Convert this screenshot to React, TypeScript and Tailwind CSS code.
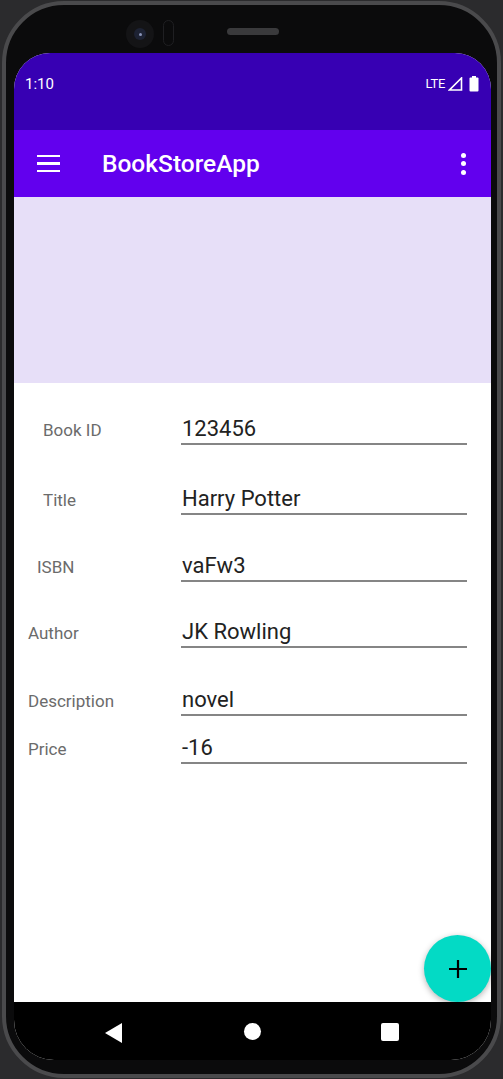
import React from "react";

const rows = [
  { label: "Book ID", value: "123456", pl: "pl-[29px]", mt: "mt-[32px]" },
  { label: "Title", value: "Harry Potter", pl: "pl-[29px]", mt: "mt-[40px]" },
  { label: "ISBN", value: "vaFw3", pl: "pl-[23px]", mt: "mt-[37px]" },
  { label: "Author", value: "JK Rowling", pl: "pl-[14px]", mt: "mt-[36px]" },
  { label: "Description", value: "novel", pl: "pl-[14px]", mt: "mt-[38px]" },
  { label: "Price", value: "-16", pl: "pl-[14px]", mt: "mt-[18px]" },
];

export default function App() {
  return (
    <div
      className="w-[503px] h-[1079px] bg-[#2b2b2d] overflow-hidden"
      style={{ fontFamily: "Roboto, 'Noto Sans', sans-serif" }}
    >
      <div className="relative mt-[1px] ml-[2px] w-[499px] h-[1077px] rounded-[62px] border-[4px] border-[#4a4a4c] bg-[#0b0b0c] pt-[48px] pl-[8px]">
        {/* camera + speaker */}
        <div className="absolute left-[120px] top-[15px] w-[28px] h-[28px] rounded-full bg-[#141416] flex items-center justify-center">
          <div className="w-[12px] h-[12px] rounded-full bg-[#1d2233] flex items-center justify-center">
            <div className="w-[3px] h-[3px] rounded-full bg-[#8a94b8]" />
          </div>
        </div>
        <div className="absolute left-[157px] top-[15px] w-[11px] h-[26px] rounded-full border border-[#1f1f22]" />
        <div className="absolute left-[221px] top-[23px] w-[52px] h-[7px] rounded-full bg-[#3a3a3c]" />

        <div className="w-[477px] h-[1007px] rounded-t-[36px] rounded-b-[40px] overflow-hidden flex flex-col bg-white">
          {/* status bar */}
          <div className="h-[77px] bg-[#3700b3] flex items-start justify-between px-[11px] pt-[22px] text-white">
            <span className="text-[15px] leading-[18px]">1:10</span>
            <div className="flex items-center gap-[3px] pr-[1px]">
              <span className="text-[13px] leading-[18px] tracking-[-0.3px]">LTE</span>
              <svg width="15" height="14" viewBox="0 0 15 14">
                <path d="M13.5 1 L13.5 13 L1.5 13 Z" fill="none" stroke="white" strokeWidth="1.6" strokeLinejoin="miter" />
              </svg>
              <svg width="10" height="16" viewBox="0 0 10 16" className="ml-[3px]">
                <rect x="3" y="0" width="4" height="2" fill="white" />
                <rect x="0.5" y="1.5" width="9" height="14" rx="1" fill="white" />
              </svg>
            </div>
          </div>
          {/* app bar */}
          <div className="h-[67px] bg-[#6200ee] flex items-center text-white">
            <div className="w-[23px] ml-[23px] flex flex-col gap-[5px]">
              <div className="h-[2.5px] bg-white" />
              <div className="h-[2.5px] bg-white" />
              <div className="h-[2.5px] bg-white" />
            </div>
            <span className="ml-[42px] text-[24.5px] font-medium leading-[30px]">BookStoreApp</span>
            <div className="ml-auto mr-[25px] flex flex-col gap-[3.5px]">
              <div className="w-[5px] h-[5px] rounded-full bg-white" />
              <div className="w-[5px] h-[5px] rounded-full bg-white" />
              <div className="w-[5px] h-[5px] rounded-full bg-white" />
            </div>
          </div>
          {/* banner */}
          <div className="h-[186px] bg-[#e7dff8]" />
          {/* form */}
          <div className="relative flex-1 bg-white">
            {rows.map((r) => (
              <div key={r.label} className={`flex items-center ${r.mt}`}>
                <div className={`w-[167px] ${r.pl} text-[17px] leading-[20px] text-[#6b6b6b]`}>
                  {r.label}
                </div>
                <div className="w-[286px] h-[30px] border-b-2 border-[#858585] text-[22px] leading-[28px] text-[#222222] pl-[1px]">
                  {r.value}
                </div>
              </div>
            ))}
            <div className="absolute right-0 bottom-0 w-[67px] h-[67px] rounded-full bg-[#03dac5] shadow-[0_2px_6px_rgba(0,0,0,0.3)] flex items-center justify-center">
              <svg width="20" height="20" viewBox="0 0 20 20">
                <path d="M10 1 V19 M1 10 H19" stroke="black" strokeWidth="2.2" />
              </svg>
            </div>
          </div>
          {/* nav bar */}
          <div className="h-[58px] bg-black relative">
            <svg className="absolute left-[91px] top-[21px]" width="18" height="20" viewBox="0 0 18 20">
              <path d="M17 0 V20 L0 10 Z" fill="white" />
            </svg>
            <div className="absolute left-[230px] top-[21px] w-[17px] h-[17px] rounded-full bg-white" />
            <div className="absolute left-[367px] top-[21px] w-[18px] h-[18px] rounded-[2px] bg-white" />
          </div>
        </div>
      </div>
    </div>
  );
}
